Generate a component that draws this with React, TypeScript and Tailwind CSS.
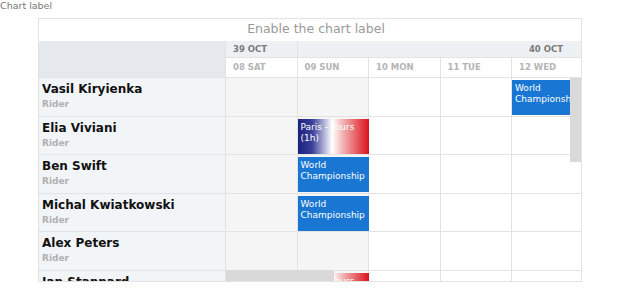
const riders = [
  "Vasil Kiryienka",
  "Elia Viviani",
  "Ben Swift",
  "Michal Kwiatkowski",
  "Alex Peters",
  "Ian Stannard",
]

const days = [
  { label: "08 SAT", weekend: true },
  { label: "09 SUN", weekend: true },
  { label: "10 MON", weekend: false },
  { label: "11 TUE", weekend: false },
  { label: "12 WED", weekend: false },
]

type Ev = { row: number; col: number; kind: "world" | "paris" }

const events: Ev[] = [
  { row: 0, col: 4, kind: "world" },
  { row: 1, col: 1, kind: "paris" },
  { row: 2, col: 1, kind: "world" },
  { row: 3, col: 1, kind: "world" },
  { row: 5, col: 1, kind: "paris" },
]

const COL = 71.5

function EventBox({ kind }: { kind: Ev["kind"] }) {
  if (kind === "world") {
    return (
      <div className="absolute left-0 top-[2px] h-[35px] w-[71px] overflow-hidden bg-[#1976d2] px-[3px] pt-[3px] text-[9px] leading-[11px] text-white">
        <div>World</div>
        <div className="whitespace-nowrap">Championship</div>
      </div>
    )
  }
  return (
    <div className="absolute left-0 top-[2px] h-[35px] w-[71px] overflow-hidden bg-[linear-gradient(to_right,#1c2180_0%,#3a3f98_20%,#ffffff_48%,#f3b8b8_62%,#dc111d_100%)] px-[3px] pt-[3px] text-[9px] leading-[11px] text-white">
      <div className="whitespace-nowrap">Paris - Tours</div>
      <div>(1h)</div>
    </div>
  )
}

export default function App() {
  return (
    <div className="h-[300px] w-[620px] overflow-hidden bg-white font-['DejaVu_Sans',sans-serif]">
      <div className="h-[18px] text-[9.5px] leading-[11px] text-[#777]">Chart label</div>
      <div className="ml-[38px] flex h-[264px] w-[544px] flex-col border border-[#e3e3e3]">
        <div className="h-[22px] shrink-0 pl-[12px] text-center text-[12.5px] leading-[20px] text-[#9a9a9a]">
          Enable the chart label
        </div>
        <div className="flex min-h-0 flex-1">
          <div className="w-[187px] shrink-0 overflow-hidden border-r border-[#e3e3e3] bg-[#f2f5f8]">
            <div className="h-[37px] border-b border-[#e3e3e3] bg-[#e5e9ed]" />
            {riders.map((name) => (
              <div key={name} className="h-[38.6px] border-b border-[#e3e3e3] pl-[3px] pt-[2px]">
                <div className="text-[12px] font-bold leading-[18px] text-[#111]">{name}</div>
                <div className="text-[9px] font-bold leading-[13px] text-[#b0b0b0]">Rider</div>
              </div>
            ))}
          </div>
          <div className="relative min-w-0 flex-1 overflow-hidden">
            <div className="flex h-[17px] border-b border-[#e3e3e3] bg-[#eef1f4] text-[8.5px] font-bold leading-[16px] text-[#7a7a7a]">
              <div className="w-[71.5px] shrink-0 border-r border-[#e3e3e3] pl-[7px]">39 OCT</div>
              <div className="flex-1 pr-[18px] text-right">40 OCT</div>
            </div>
            <div className="flex h-[20px] border-b border-[#e3e3e3] bg-white text-[8.5px] font-bold leading-[19px] text-[#b4b4b4]">
              {days.map((d) => (
                <div key={d.label} className="w-[71.5px] shrink-0 border-r border-[#e3e3e3] pl-[7px]">
                  {d.label}
                </div>
              ))}
            </div>
            {riders.map((name, r) => (
              <div key={name} className="relative flex h-[38.6px] border-b border-[#e3e3e3]">
                {days.map((d, c) => (
                  <div
                    key={d.label}
                    className={`relative h-full shrink-0 border-r border-[#e3e3e3] ${d.weekend ? "bg-[#f5f5f5]" : "bg-white"}`}
                    style={{ width: COL }}
                  >
                    {events
                      .filter((e) => e.row === r && e.col === c)
                      .map((e, i) => (
                        <EventBox key={i} kind={e.kind} />
                      ))}
                  </div>
                ))}
              </div>
            ))}
            <div className="absolute right-0 top-[37px] h-[84px] w-[11px] bg-[#d9d9d9]" />
            <div className="absolute bottom-0 left-0 h-[11px] w-[108px] bg-[#d9d9d9]" />
          </div>
        </div>
      </div>
    </div>
  )
}
